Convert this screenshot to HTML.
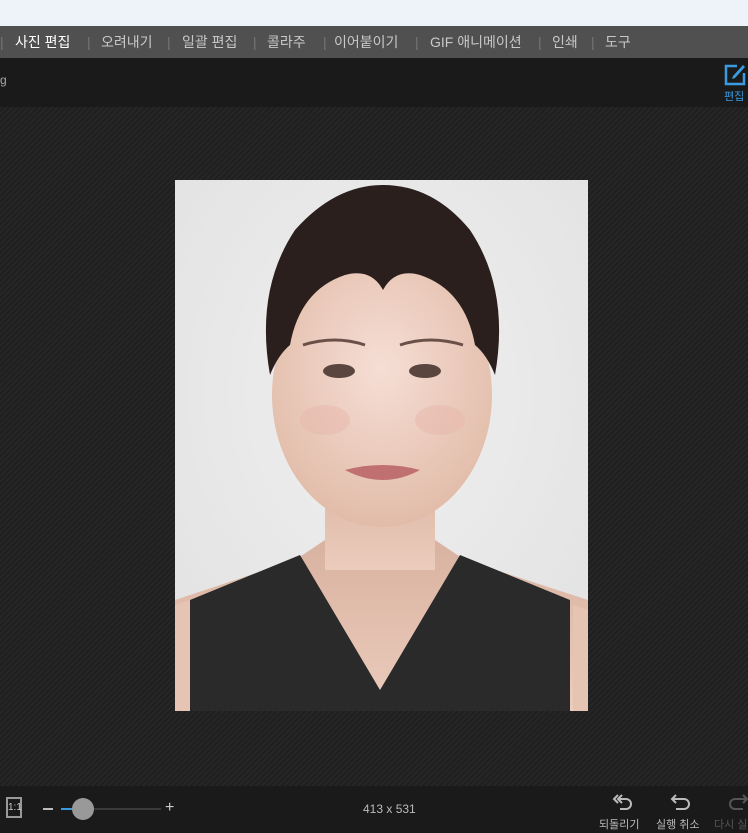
<!DOCTYPE html>
<html><head><meta charset="utf-8"><style>
*{margin:0;padding:0;box-sizing:border-box}
body{width:748px;height:833px;overflow:hidden;background:#222;font-family:"Liberation Sans","Noto Sans CJK KR",sans-serif;position:relative}
.top{position:absolute;left:0;top:0;width:748px;height:26px;background:#eef2f9}
.menu{position:absolute;left:0;top:26px;width:748px;height:32px;background:#505050;color:#c8c8c8;font-size:14px;line-height:32px;white-space:nowrap}
.menu span{position:absolute;top:0}
.sep{color:#777}
.tool{position:absolute;left:0;top:58px;width:748px;height:49px;background:#1a1a1a}
.canvas{position:absolute;left:0;top:107px;width:748px;height:679px;background:repeating-linear-gradient(135deg,#262626 0 2px,#1f1f1f 2px 4px)}
.bot{position:absolute;left:0;top:786px;width:748px;height:47px;background:#1a1a1a;color:#bbb;font-size:12px}
</style></head><body>
<div class="top"></div>
<div class="menu">
<span class="sep" style="left:0">|</span>
<span style="left:15px;color:#fff">사진 편집</span><span class="sep" style="left:87px">|</span>
<span style="left:101px">오려내기</span><span class="sep" style="left:167px">|</span>
<span style="left:182px">일괄 편집</span><span class="sep" style="left:253px">|</span>
<span style="left:267px">콜라주</span><span class="sep" style="left:323px">|</span>
<span style="left:334px">이어붙이기</span><span class="sep" style="left:415px">|</span>
<span style="left:430px">GIF 애니메이션</span><span class="sep" style="left:538px">|</span>
<span style="left:552px">인쇄</span><span class="sep" style="left:591px">|</span>
<span style="left:605px">도구</span>
</div>
<div class="tool">
<div style="position:absolute;left:0;top:15px;color:#aaa;font-size:12px">g</div>
<svg style="position:absolute;left:723px;top:5px" width="24" height="24" viewBox="0 0 24 24"><path d="M14 3H3v18h18V10" fill="none" stroke="#3a9be0" stroke-width="2.5"/><path d="M20 2l2 2-10 11-3 1 1-3z" fill="#3a9be0"/></svg>
<div style="position:absolute;left:724px;top:30px;color:#3a9be0;font-size:11px">편집</div>
</div>
<div class="canvas">
<svg style="position:absolute;left:175px;top:73px" width="413" height="531" viewBox="0 0 413 531">
<defs>
<radialGradient id="bg" cx="0.5" cy="0.4" r="0.7"><stop offset="0" stop-color="#f0f0f0"/><stop offset="1" stop-color="#e2e2e2"/></radialGradient>
<radialGradient id="sk" cx="0.5" cy="0.4" r="0.6"><stop offset="0" stop-color="#f6ded5"/><stop offset="1" stop-color="#e2bca9"/></radialGradient>
<linearGradient id="nk" x1="0" y1="0" x2="0" y2="1"><stop offset="0" stop-color="#d9b2a0"/><stop offset="1" stop-color="#ecccbd"/></linearGradient>
</defs>
<rect width="413" height="531" fill="url(#bg)"/>
<path d="M0 420 L120 380 L150 360 L260 360 L290 380 L413 420 V531 H0Z" fill="url(#nk)"/>
<rect x="150" y="280" width="110" height="110" fill="url(#nk)"/>
<path d="M15 420 L125 375 L205 510 L285 375 L395 420 V531 H15Z" fill="#2a2a2a"/>
<path d="M0 425 L15 420 V531 H0Z" fill="#e6c4b4"/>
<path d="M398 425 L413 430 V531 H398Z" fill="#e6c4b4"/>
<ellipse cx="207" cy="215" rx="110" ry="132" fill="url(#sk)"/>
<path d="M95 195 Q80 110 120 50 Q160 5 208 5 Q258 5 295 50 Q335 110 320 195 Q312 175 300 165 Q290 110 245 95 Q220 88 208 110 Q196 88 170 95 Q125 110 115 165 Q103 175 95 195Z" fill="#2a1f1c"/>
<ellipse cx="164" cy="191" rx="16" ry="7" fill="#5a463e"/>
<ellipse cx="250" cy="191" rx="16" ry="7" fill="#5a463e"/>
<path d="M128 165 Q160 155 190 165" stroke="#6a5048" stroke-width="3" fill="none"/>
<path d="M225 165 Q255 155 288 165" stroke="#6a5048" stroke-width="3" fill="none"/>
<path d="M170 290 Q208 280 245 290 Q208 310 170 290Z" fill="#c07070"/>
<ellipse cx="150" cy="240" rx="25" ry="15" fill="#e8b8ac" opacity=".5"/>
<ellipse cx="265" cy="240" rx="25" ry="15" fill="#e8b8ac" opacity=".5"/>
</svg>
</div>
<div class="bot">
<div style="position:absolute;left:6px;top:11px;width:16px;height:21px;border:2px solid #999;color:#ccc;font-size:10px;line-height:17px;text-align:center">1:1</div>
<div style="position:absolute;left:43px;top:22px;width:10px;height:2px;background:#bbb"></div>
<div style="position:absolute;left:61px;top:22px;width:100px;height:2px;background:#3a3a3a"></div>
<div style="position:absolute;left:61px;top:22px;width:12px;height:2px;background:#3a9be0"></div>
<div style="position:absolute;left:72px;top:12px;width:22px;height:22px;border-radius:50%;background:#999"></div>
<div style="position:absolute;left:165px;top:13px;color:#ccc;font-size:16px">+</div>
<div style="position:absolute;left:363px;top:16px;color:#bbb">413 x 531</div>
<svg style="position:absolute;left:610px;top:6px" width="26" height="20" viewBox="0 0 26 20"><path d="M8 3L4 7l4 4M12 3L8 7l4 4M8 7h8a5 5 0 010 10h-6" fill="none" stroke="#bbb" stroke-width="2"/></svg>
<div style="position:absolute;left:599px;top:30px;font-size:11px">되돌리기</div>
<svg style="position:absolute;left:668px;top:6px" width="26" height="20" viewBox="0 0 26 20"><path d="M8 3L4 7l4 4M4 7h12a5 5 0 010 10h-8" fill="none" stroke="#bbb" stroke-width="2"/></svg>
<div style="position:absolute;left:656px;top:30px;font-size:11px">실행 취소</div>
<svg style="position:absolute;left:725px;top:6px" width="26" height="20" viewBox="0 0 26 20"><path d="M18 3l4 4-4 4M22 7H10a5 5 0 000 10h8" fill="none" stroke="#555" stroke-width="2"/></svg>
<div style="position:absolute;left:714px;top:30px;font-size:11px;color:#555;white-space:nowrap">다시 실행</div>
</div>
</body></html>
